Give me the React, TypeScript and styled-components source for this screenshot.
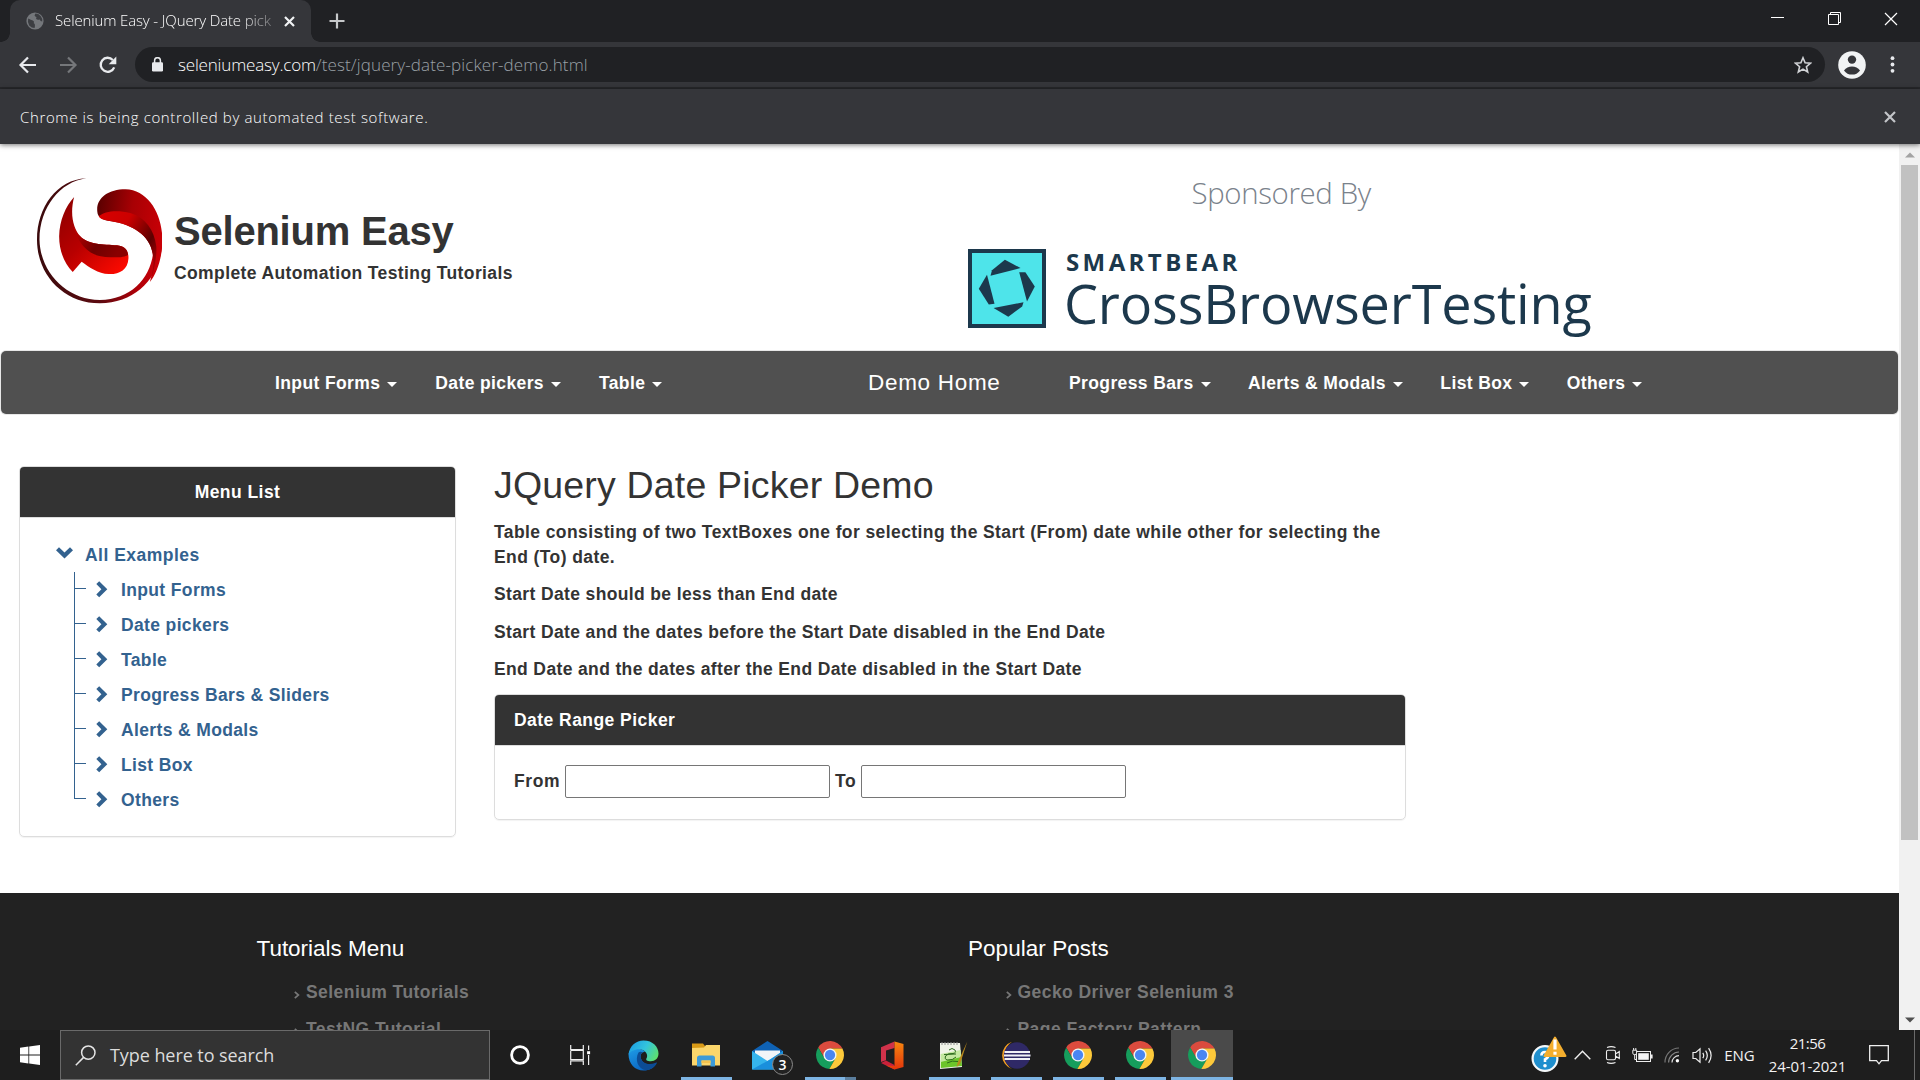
import React from "react";
import styled, { createGlobalStyle, css } from "styled-components";

const GlobalStyle = createGlobalStyle`
  *, *::before, *::after { box-sizing: border-box; }
  body { margin: 0; overflow: hidden; }
  svg { display: block; flex: none; }
`;

const ui = css`
  font-family: "Open Sans", "Noto Sans", sans-serif;
`;

const Desktop = styled.div`
  width: 1920px;
  height: 1080px;
  display: flex;
  flex-direction: column;
  overflow: hidden;
  background: #fff;
  white-space: nowrap;
`;

/* ---------- browser chrome ---------- */

const TabStrip = styled.div`
  ${ui}
  flex: none;
  height: 42px;
  display: flex;
  background: #202124;
`;

const Tab = styled.div`
  position: relative;
  width: 301px;
  margin-left: 10px;
  padding: 0 16px;
  display: flex;
  align-items: center;
  border-radius: 10px 10px 0 0;
  background: #35363a;

  &::before,
  &::after {
    content: "";
    position: absolute;
    bottom: 0;
    width: 9px;
    height: 9px;
  }
  &::before {
    left: -9px;
    background: radial-gradient(circle at 0 0, transparent 8.5px, #35363a 9px);
  }
  &::after {
    right: -9px;
    background: radial-gradient(circle at 100% 0, transparent 8.5px, #35363a 9px);
  }
`;

const TabTitle = styled.div`
  width: 217px;
  margin: 0 13px 0 11px;
  overflow: hidden;
  font-size: 15px;
  font-weight: 300;
  line-height: 40px;
  padding-bottom: 2px;
  letter-spacing: -0.14px;
  color: #fff;
  mask-image: linear-gradient(90deg, #000 84%, rgba(0, 0, 0, 0.35) 100%);
`;

const NewTab = styled.div`
  width: 52px;
  display: flex;
  align-items: center;
  justify-content: center;
`;

const WindowButtons = styled.div`
  margin-left: auto;
  display: flex;
`;

const WindowButton = styled.div`
  width: 57px;
  height: 37px;
  display: flex;
  align-items: center;
  justify-content: center;
  padding-right: 1px;
`;

const Toolbar = styled.div`
  ${ui}
  flex: none;
  height: 47px;
  display: flex;
  align-items: flex-start;
  padding: 5px 25px 0 18px;
  background: #35363a;
  border-bottom: 2px solid #27282b;
`;

const NavIcons = styled.div`
  width: 117px;
  height: 35px;
  display: flex;
  align-items: center;
  gap: 20px;
`;

const AddressBar = styled.div`
  flex: 1;
  height: 35px;
  display: flex;
  align-items: center;
  padding: 0 13px 0 17px;
  border-radius: 18px;
  background: #202124;
`;

const Url = styled.div`
  flex: 1;
  margin-left: 15px;
  font-size: 17px;
  line-height: 35px;
  font-weight: 300;
  letter-spacing: 0.12px;
  color: #9aa0a6;
`;

const Host = styled.span`
  letter-spacing: -0.17px;
  color: #fff;
`;

const ToolbarEnd = styled.div`
  height: 35px;
  display: flex;
  align-items: center;
  gap: 24px;
  margin-left: 13px;
`;

const InfoBar = styled.div`
  ${ui}
  position: relative;
  z-index: 1;
  flex: none;
  height: 55px;
  display: flex;
  align-items: center;
  justify-content: space-between;
  padding: 0 24px 0 20px;
  background: #35363a;
  color: #fff;
  font-size: 15px;
  font-weight: 300;
  letter-spacing: 0.63px;
  box-shadow: 0 1px 5px rgba(0, 0, 0, 0.55);
`;

/* ---------- page ---------- */

const Viewport = styled.div`
  flex: none;
  height: 886px;
  display: flex;
`;

const Page = styled.main`
  width: 1899px;
  height: 886px;
  overflow: hidden;
  display: flex;
  flex-direction: column;
  font: bold 17.5px/25px "Liberation Sans", Arial, sans-serif;
  letter-spacing: 0.38px;
  color: #333;
`;

const Header = styled.header`
  flex: none;
  height: 207px;
  display: flex;
`;

const Brand = styled.div`
  width: 968px;
  display: flex;
  align-items: flex-start;
  padding: 34px 0 0 37px;
`;

const BrandText = styled.div`
  margin: 30px 0 0 12px;
`;

const SiteName = styled.div`
  font-size: 40px;
  line-height: 46px;
  letter-spacing: -0.22px;
`;

const Tagline = styled.div`
  margin-top: 7px;
  letter-spacing: 0.39px;
`;

const Sponsor = styled.div`
  ${ui}
  padding-top: 29px;
`;

const SponsoredBy = styled.div`
  padding-left: 223.5px;
  font-size: 29.4px;
  font-weight: 300;
  line-height: 40px;
  letter-spacing: -0.35px;
  color: #7a828b;
`;

const SponsorLogo = styled.div`
  display: flex;
  align-items: flex-start;
  margin-top: 36px;
  color: #1c384c;
`;

const SponsorName = styled.div`
  margin: -2px 0 0 20px;
`;

const Company = styled.div`
  font-size: 24px;
  font-weight: 700;
  line-height: 30px;
  letter-spacing: 3.4px;
`;

const Product = styled.div`
  margin: -11.5px 0 0 -2px;
  font-size: 54px;
  font-weight: 400;
  line-height: 74px;
  letter-spacing: -0.15px;
`;

const NavBar = styled.nav`
  flex: none;
  height: 63px;
  margin: 0 1px;
  padding-top: 1px;
  display: flex;
  align-items: center;
  border-radius: 5px;
  background: #505050;
  box-shadow: 0 0 0 1px #e7e7e7;
  color: #fff;
`;

const NavGroup = styled.div<{ $gap: number }>`
  display: flex;
  gap: ${(p) => p.$gap}px;
`;

const LeftNav = styled(NavGroup)`
  width: 593px;
  margin-left: 274px;
`;

const NavItem = styled.div`
  display: flex;
  align-items: center;

  &::after {
    content: "";
    margin: 2px 0 0 7px;
    border: 5px solid transparent;
    border-top-color: #fff;
    border-bottom: 0;
  }
`;

const NavHome = styled.div`
  width: 201px;
  padding-bottom: 1px;
  font-size: 22.5px;
  font-weight: 400;
  letter-spacing: 0.7px;
`;

const Content = styled.section`
  flex: none;
  height: 479px;
  padding: 52px 19px 0;
  display: flex;
  align-items: flex-start;
  gap: 38px;
`;

const Panel = styled.div`
  border: 1px solid #ddd;
  border-radius: 5px;
  overflow: hidden;
  box-shadow: 0 1px 1px rgba(0, 0, 0, 0.05);
`;

const PanelHeading = styled.div<{ $center?: boolean }>`
  height: 51px;
  padding: 13px 19px 12px;
  text-align: ${(p) => (p.$center ? "center" : "left")};
  letter-spacing: 0.45px;
  border-bottom: 1px solid #ddd;
  background: #333;
  color: #fff;
`;

const Sidebar = styled(Panel)`
  width: 437px;
  height: 371px;
`;

const Tree = styled.div`
  padding: 19px 0 0 36px;
  letter-spacing: 0.36px;
  color: #33628f;
`;

const TreeRoot = styled.div`
  height: 35px;
  padding-top: 2px;
  display: flex;
  align-items: center;
  gap: 12px;
  letter-spacing: 0.48px;

  svg {
    margin-top: -6px;
  }
`;

const TreeList = styled.ul`
  list-style: none;
  margin: 0 0 0 18px;
  padding: 0;
`;

const TreeItem = styled.li`
  position: relative;
  height: 35px;
  display: flex;
  align-items: center;
  gap: 13.5px;
  padding: 2px 0 0 21.5px;

  svg {
    margin-top: -3px;
  }
  &::before {
    content: "";
    position: absolute;
    left: 0;
    top: 0;
    width: 12px;
    height: 17px;
    border: solid #33628f;
    border-width: 0 0 1px 1px;
  }
  &:not(:last-child)::after {
    content: "";
    position: absolute;
    left: 0;
    top: 0;
    height: 35px;
    border-left: 1px solid #33628f;
  }
`;

const Main = styled.div`
  width: 911.5px;
`;

const Title = styled.h1`
  margin: -2px 0 13.5px;
  font-size: 37.5px;
  line-height: 42px;
  font-weight: 400;
  letter-spacing: 0.18px;
`;

const Para = styled.p`
  margin: 0 0 12.5px;
  letter-spacing: 0.365px;

  &:first-of-type {
    letter-spacing: 0.41px;
  }
`;

const PickerPanel = styled(Panel)`
  height: 126px;
  margin-top: -1px;
`;

const PickerForm = styled.div`
  display: flex;
  align-items: center;
  padding: 19px 19px 0;
`;

const FieldLabel = styled.label<{ $w: number }>`
  width: ${(p) => p.$w}px;
  letter-spacing: 0.6px;
`;

const DateInput = styled.input`
  width: 265px;
  height: 33px;
  margin-right: 5px;
  border: 1px solid #767676;
  border-radius: 2px;
  background: #fff;
`;

const Footer = styled.footer`
  flex: none;
  height: 240px;
  padding: 43px 0 0 256.5px;
  display: flex;
  background: #222;
`;

const FooterColumn = styled.div`
  width: 711.5px;
`;

const FooterTitle = styled.div<{ $ls: number }>`
  margin-bottom: 12px;
  font-size: 22.5px;
  font-weight: 400;
  line-height: 26px;
  letter-spacing: ${(p) => p.$ls}px;
  color: #fff;
`;

const FooterLink = styled.div`
  height: 37px;
  padding-left: 37.5px;
  display: flex;
  align-items: center;
  gap: 6px;
  letter-spacing: 0.44px;
  color: #777;

  svg {
    margin-top: 4px;
  }
`;

const ScrollTrack = styled.div`
  width: 21px;
  display: flex;
  flex-direction: column;
  align-items: center;
  background: #f1f1f1;
`;

const ScrollArrow = styled.div`
  height: 21px;
  display: flex;
  align-items: center;
`;

const ScrollThumb = styled.div`
  width: 17px;
  height: 675px;
  margin-bottom: auto;
  background: #c1c1c1;
`;

/* ---------- taskbar ---------- */

const Taskbar = styled.div`
  ${ui}
  position: relative;
  flex: none;
  height: 50px;
  display: flex;
  background: #1e1e1e;
  color: #f2f2f2;
  font-size: 15px;
`;

const TaskButton = styled.div`
  width: 60px;
  display: flex;
  align-items: center;
  justify-content: center;
`;

const SearchBox = styled.div`
  width: 430px;
  padding-left: 14px;
  display: flex;
  align-items: center;
  gap: 14px;
  border: 1px solid #6a6a6a;
  background: #333;
  font-size: 18px;
  letter-spacing: -0.07px;
  color: #dcdcdc;
`;

const Apps = styled.div`
  display: flex;
  margin-left: 3px;
`;

const TaskApp = styled.div<{ $state: "idle" | "open" | "stack" | "active" }>`
  position: relative;
  width: 62px;
  display: flex;
  align-items: center;
  justify-content: center;
  padding-right: 1px;
  background: ${(p) => (p.$state === "active" ? "#4a4a4a" : "transparent")};

  &::after {
    content: "";
    display: ${(p) => (p.$state === "idle" ? "none" : "block")};
    position: absolute;
    bottom: 0;
    height: 3px;
    left: ${(p) => (p.$state === "active" ? 0 : 6)}px;
    right: ${(p) => (p.$state === "active" ? 0 : 5)}px;
    background: ${(p) =>
      p.$state === "stack" ? "linear-gradient(90deg, #7db4e3 40px, #5b7f9e 40px)" : "#7db4e3"};
  }
`;

const MailBadge = styled.div`
  position: absolute;
  left: 35px;
  top: 24px;
  width: 21px;
  height: 21px;
  border: 1px solid #8a8a8a;
  border-radius: 50%;
  background: #222;
  color: #fff;
  font-size: 14px;
  font-weight: 600;
  line-height: 19px;
  text-align: center;
`;

const Tray = styled.div`
  margin-left: auto;
  display: flex;
`;

const TraySlot = styled.div<{ $w: number }>`
  width: ${(p) => p.$w}px;
  display: flex;
  align-items: center;
  justify-content: center;
`;

const Clock = styled.div`
  text-align: center;
  line-height: 23px;
  letter-spacing: -0.1px;
`;

const ClockTime = styled.div`
  letter-spacing: -0.5px;
`;

const ShowDesktop = styled.div`
  width: 6px;
  margin-left: 9px;
  border-left: 1px solid #6a6a6a;
`;

/* ---------- drawings ---------- */

const SeleniumLogo = () => (
  <svg width="125" height="126" viewBox="104 113 350 378" preserveAspectRatio="none">
    <defs>
      <linearGradient id="top" x1="0" y1="0.3" x2="1" y2="0.5">
        <stop offset="0" stopColor="#5e0000" />
        <stop offset="0.5" stopColor="#a80004" />
        <stop offset="1" stopColor="#c90006" />
      </linearGradient>
      <linearGradient id="fold" x1="0" y1="0" x2="1" y2="0.7">
        <stop offset="0" stopColor="#d80000" />
        <stop offset="0.4" stopColor="#cc0000" />
        <stop offset="0.8" stopColor="#5c0000" />
        <stop offset="1" stopColor="#a00004" />
      </linearGradient>
      <linearGradient id="ring" x1="0" y1="0" x2="1" y2="0">
        <stop offset="0" stopColor="#3a0a0c" />
        <stop offset="0.5" stopColor="#5c0a10" />
        <stop offset="0.8" stopColor="#b00008" />
        <stop offset="1" stopColor="#d00008" />
      </linearGradient>
      <linearGradient id="low" x1="0" y1="0" x2="0.9" y2="1">
        <stop offset="0" stopColor="#8a0000" />
        <stop offset="0.5" stopColor="#b80000" />
        <stop offset="1" stopColor="#ff0a00" />
      </linearGradient>
      <linearGradient id="lowShade" x1="0" y1="0" x2="1" y2="0.4">
        <stop offset="0" stopColor="#d00000" />
        <stop offset="0.6" stopColor="#700000" />
        <stop offset="1" stopColor="#8a0000" />
      </linearGradient>
    </defs>
    <path
      fill="url(#ring)"
      d="M242 114C160 118 104 200 104 298C104 405 180 489 280 489C385 488 453 405 455 300L430 330C424 412 368 478 280 479C188 478 113 398 111 298C111 200 170 124 242 114Z"
    />
    <path
      fill="url(#top)"
      d="M273 215C268 175 302 147 352 147C415 149 455 220 455 300C455 350 440 400 420 425C428 395 432 365 428 340C420 285 370 252 312 243C284 239 274 229 273 215Z"
    />
    <path
      fill="url(#fold)"
      d="M277 228C292 212 330 208 365 218C408 232 432 268 438 318C440 345 434 378 424 415C430 385 432 362 428 340C420 285 370 252 312 243C290 240 279 234 277 228Z"
    />
    <path
      fill="url(#low)"
      d="M208 170C195 222 206 266 225 288C250 316 300 312 335 316C354 320 361 335 360 355C358 388 335 402 305 401C275 400 250 380 229 364L204 395C182 370 166 335 166 288C167 240 184 198 208 170Z"
    />
    <path
      fill="url(#lowShade)"
      d="M204 245C208 266 215 278 225 288C250 316 300 312 335 316C350 319 358 330 359 343C350 352 322 352 295 350C255 346 218 320 204 245Z"
    />
  </svg>
);

const CrossBrowserIcon = () => (
  <svg width="78" height="79" viewBox="0 0 78 79">
    <rect x="2" y="2" width="74" height="75" fill="#4ee4ea" stroke="#1c384c" strokeWidth="4" />
    <g fill="#1c384c">
      <path d="M22.5 26.7L24 21.3L36.9 10.7L52.5 19Z" />
      <path d="M51.2 23.3H57.4L66.8 37.5L59 52.5Z" />
      <path d="M55.5 53.3L54.2 57.4L40.3 67.8L25.6 59Z" />
      <path d="M19 25.7L26.5 54.7L20.8 55.4L10.8 39.8Z" />
    </g>
  </svg>
);

const Chevron = ({ down }: { down?: boolean }) =>
  down ? (
    <svg width="17" height="12" viewBox="0 0 17 12">
      <path d="M0 3.2L3 0.3L8.5 5.6L14 0.3L17 3.2L8.5 11.5Z" fill="#33628f" />
    </svg>
  ) : (
    <svg width="12" height="17" viewBox="0 0 12 17">
      <path d="M0.3 3L3.2 0.2L11.3 8.2L3.2 16.3L0.3 13.5L5.4 8.2Z" fill="#33628f" />
    </svg>
  );

const Cross = ({ size, width, color }: { size: number; width: number; color: string }) => (
  <svg width={size} height={size} viewBox={`0 0 ${size} ${size}`}>
    <path
      d={`M1 1L${size - 1} ${size - 1}M${size - 1} 1L1 ${size - 1}`}
      stroke={color}
      strokeWidth={width}
    />
  </svg>
);

const wedge = "M-20.2 -12.95L-9.53 5.5L0 0L0 -11L21.3 -11A24 24 0 0 0 -20.2 -12.95Z";

const ChromeIcon = () => (
  <svg width="28" height="28" viewBox="-24 -24 48 48">
    <path d={wedge} fill="#db4b3e" />
    <path d={wedge} fill="#169d5c" transform="rotate(-120)" />
    <path d={wedge} fill="#fdc93a" transform="rotate(120)" />
    <circle r="11.2" fill="#f3f6f4" />
    <circle r="8.8" fill="#4a86f2" />
  </svg>
);

const EdgeIcon = () => (
  <svg width="31" height="31" viewBox="0 0 31 31">
    <defs>
      <linearGradient id="edgeTop" x1="0" y1="0.3" x2="1" y2="0.7">
        <stop offset="0" stopColor="#1c9fe4" />
        <stop offset="0.5" stopColor="#33c4dc" />
        <stop offset="1" stopColor="#5fe06b" />
      </linearGradient>
      <linearGradient id="edgeLeft" x1="0" y1="0" x2="0.6" y2="1">
        <stop offset="0" stopColor="#1e9ce6" />
        <stop offset="1" stopColor="#0a63c0" />
      </linearGradient>
    </defs>
    <path
      fill="url(#edgeLeft)"
      d="M0.5 14C0.5 24 7 30.5 15.5 30.5C21 30.5 26 28 28.5 23.5C24 26 13 25 12.5 16.5C12.5 13 15 11.5 17 12C14 8 4 7 0.5 14Z"
    />
    <path
      fill="#0c4c94"
      d="M10.5 12.5C6.5 20 10 29 18 30.2C23 29.8 27 27 29 22.8C28.5 22.2 28 22.5 27 23C20 26 13 22.5 12.5 16.5C12.4 14.5 13.3 13 14.6 12.2C13 11.3 11.5 11.5 10.5 12.5Z"
    />
    <path
      fill="url(#edgeTop)"
      d="M0.5 14.5C1.5 6 8 0.5 15.5 0.5C25 0.5 30.5 7 30.5 13.5C30.5 18.5 27 21.2 22.8 21.2C19 21.2 17.6 19.8 18.4 18.4C20.6 15.5 18 9.2 11 9.2C6 9.2 2 11.5 0.5 14.5Z"
    />
  </svg>
);

const ExplorerIcon = () => (
  <svg width="28" height="24" viewBox="0 0 28 24">
    <path d="M0 0.5H11L13 3V8H0Z" fill="#d99a16" />
    <path d="M0 5L12 4.5L14 2H28V22.5H0Z" fill="#fbd66b" />
    <path d="M5 23.5V15Q5 12.5 7.5 12.5H20.5Q23 12.5 23 15V23.5H18.5V17.5H9.5V23.5Z" fill="#3d9bd8" />
    <path d="M9.5 17.5H18.5V20H9.5Z" fill="#f4c24d" />
  </svg>
);

const MailIcon = () => (
  <svg width="31" height="29" viewBox="0 0 31 29">
    <path d="M0 10L15.5 0L31 10V14H0Z" fill="#0f62b4" />
    <path d="M3 9.5H28V18L15.5 24L3 18Z" fill="#f2f5f8" />
    <path d="M0 10L15.5 20L31 10V28.5H0Z" fill="#35b4ec" />
    <path d="M0 28.5L19 18L31 10V28.5Z" fill="#1a8fdc" />
  </svg>
);

const OfficeIcon = () => (
  <svg width="24" height="29" viewBox="0 0 24 29">
    <defs>
      <linearGradient id="office" x1="0" y1="0" x2="0" y2="1">
        <stop offset="0" stopColor="#f7860f" />
        <stop offset="1" stopColor="#e2350c" />
      </linearGradient>
    </defs>
    <path d="M14.5 0.5L1 6.3V21L6 19.2V9.5L14.5 7Z" fill="#d0324a" />
    <path d="M1 22L6 19.5L14.5 24V28.5Z" fill="#c9213a" />
    <path d="M14.5 0.5L23.5 3V26L14.5 28.5L6 24.5L14.5 25Z" fill="url(#office)" />
  </svg>
);

const NotepadIcon = () => (
  <svg width="29" height="29" viewBox="0 0 29 29">
    <path d="M1 2L21 2L23 26L1 28Z" fill="#f0f3e8" />
    <path d="M1.8 19L22 14L23 25L1.8 27Z" fill="#6cc52a" />
    <path d="M1.6 13L21.6 9L22.2 16L1.7 21Z" fill="#c4e8a0" />
    <path d="M3 1V4M6 1V4M9 1V4M12 1V4M15 1V4M18 1V4" stroke="#8c8c8c" strokeWidth="1" />
    <path
      d="M10 9Q13 6 16 9Q17.5 12 14 12.5Q9 12 6.5 15Q5 18 8 19Q14 19.5 17 16M5 13.5L17 13M8 22Q13 19 19 20.5"
      fill="none"
      stroke="#2d6b1c"
      strokeWidth="1"
    />
    <path d="M28.3 0.5L18.5 22L17.6 26L21 23Z" fill="#b98a1d" />
  </svg>
);

const EclipseIcon = () => (
  <svg width="31" height="29" viewBox="0 0 31 29">
    <path d="M12 0.8A14.3 14.3 0 0 0 12 28A16 16 0 0 1 12 0.8Z" fill="#f4a021" />
    <circle cx="17" cy="14.5" r="13.2" fill="#2f2966" />
    <path d="M4.5 11H30M4 14.5H30.5M4.5 18H30" stroke="#f1f1f7" strokeWidth="1.9" />
  </svg>
);

const Triangle = ({ flip, color }: { flip?: boolean; color: string }) => (
  <svg width="10" height="6" viewBox="0 0 10 6">
    <path d={flip ? "M0 0.5H10L5 5.5Z" : "M0 5.5H10L5 0.5Z"} fill={color} />
  </svg>
);

const navLeft = ["Input Forms", "Date pickers", "Table"];
const navRight = ["Progress Bars", "Alerts & Modals", "List Box", "Others"];
const treeItems = [
  "Input Forms",
  "Date pickers",
  "Table",
  "Progress Bars & Sliders",
  "Alerts & Modals",
  "List Box",
  "Others",
];
const footerColumns = [
  { title: "Tutorials Menu", ls: -0.02, links: ["Selenium Tutorials", "TestNG Tutorial"] },
  { title: "Popular Posts", ls: 0.05, links: ["Gecko Driver Selenium 3", "Page Factory Pattern"] },
];

export default function App() {
  return (
    <Desktop>
      <GlobalStyle />
      <TabStrip>
        <Tab>
          <svg width="18" height="18" viewBox="0 0 18 18">
            <circle cx="9" cy="9" r="8.6" fill="#74777b" />
            <path
              d="M2.2 6.5Q5 8 6.8 8.4Q8.6 9 7.8 11.2Q9.6 12 8.6 16Q5.6 16 3.2 13.4Q1.2 10.6 2.2 6.5ZM9.4 1.6Q12.5 1.6 14.6 4Q16.8 6.6 16.2 9.6Q14.2 9.4 13.8 7.4Q11.4 8.4 10 6.8Q11.2 5 9.2 4.6Q7.8 3.4 9.4 1.6Z"
              fill="#3c3e42"
            />
          </svg>
          <TabTitle>Selenium Easy - JQuery Date pick</TabTitle>
          <Cross size={11} width={2.2} color="#f1f3f4" />
        </Tab>
        <NewTab>
          <svg width="16" height="16" viewBox="0 0 16 16">
            <path d="M8 0.5V15.5M0.5 8H15.5" stroke="#c6c8ca" strokeWidth="2.2" />
          </svg>
        </NewTab>
        <WindowButtons>
          <WindowButton>
            <svg width="13" height="3" viewBox="0 0 13 3">
              <path d="M0 0.5H13" stroke="#fff" />
            </svg>
          </WindowButton>
          <WindowButton>
            <svg width="13" height="13" viewBox="0 0 13 13">
              <path d="M0.5 2.5H10.5V12.5H0.5ZM2.5 2.5V0.5H12.5V10.5H10.5" fill="none" stroke="#fff" />
            </svg>
          </WindowButton>
          <WindowButton>
            <Cross size={14} width={1.2} color="#fff" />
          </WindowButton>
        </WindowButtons>
      </TabStrip>

      <Toolbar>
        <NavIcons>
          <svg width="20" height="20" viewBox="0 0 20 20">
            <path d="M18 10H3M10 2.5L2.5 10L10 17.5" fill="none" stroke="#e8eaed" strokeWidth="2.2" />
          </svg>
          <svg width="20" height="20" viewBox="0 0 20 20">
            <path d="M2 10H17M10 2.5L17.5 10L10 17.5" fill="none" stroke="#75777a" strokeWidth="2.2" />
          </svg>
          <svg width="20" height="20" viewBox="0 0 20 20">
            <path d="M16.2 12.3A7 7 0 1 1 14.8 5" fill="none" stroke="#e8eaed" strokeWidth="2.3" />
            <path d="M18.3 1.6V9.2H10.7Z" fill="#e8eaed" />
          </svg>
        </NavIcons>
        <AddressBar>
          <svg width="11" height="15" viewBox="0 0 11 15">
            <rect y="5.3" width="11" height="9.2" rx="1.2" fill="#e8eaed" />
            <path d="M2.6 6V3.6A2.9 2.9 0 0 1 8.4 3.6V6" fill="none" stroke="#e8eaed" strokeWidth="1.5" />
          </svg>
          <Url>
            <Host>seleniumeasy.com</Host>/test/jquery-date-picker-demo.html
          </Url>
          <svg width="18" height="18" viewBox="0 0 18 18">
            <path
              d="M9 1.8L11.1 6.8L16.5 7.2L12.4 10.7L13.7 16L9 13.1L4.3 16L5.6 10.7L1.5 7.2L6.9 6.8Z"
              fill="none"
              stroke="#d0d2d5"
              strokeWidth="1.6"
            />
          </svg>
        </AddressBar>
        <ToolbarEnd>
          <svg width="28" height="28" viewBox="0 0 28 28">
            <circle cx="14" cy="14" r="13.8" fill="#f1f3f4" />
            <circle cx="14" cy="8.6" r="4.2" fill="#35363a" />
            <path d="M6 19.4Q9 15.4 14 15.4Q19 15.4 22 19.4Q19 23.6 14 23.6Q9 23.6 6 19.4Z" fill="#35363a" />
          </svg>
          <svg width="5" height="17" viewBox="0 0 5 17">
            <g fill="#e8eaed">
              <circle cx="2.5" cy="2.2" r="1.9" />
              <circle cx="2.5" cy="8.5" r="1.9" />
              <circle cx="2.5" cy="14.8" r="1.9" />
            </g>
          </svg>
        </ToolbarEnd>
      </Toolbar>

      <InfoBar>
        <span>Chrome is being controlled by automated test software.</span>
        <Cross size={12} width={2.2} color="#c3c5c8" />
      </InfoBar>

      <Viewport>
        <Page>
          <Header>
            <Brand>
              <SeleniumLogo />
              <BrandText>
                <SiteName>Selenium Easy</SiteName>
                <Tagline>Complete Automation Testing Tutorials</Tagline>
              </BrandText>
            </Brand>
            <Sponsor>
              <SponsoredBy>Sponsored By</SponsoredBy>
              <SponsorLogo>
                <CrossBrowserIcon />
                <SponsorName>
                  <Company>SMARTBEAR</Company>
                  <Product>CrossBrowserTesting</Product>
                </SponsorName>
              </SponsorLogo>
            </Sponsor>
          </Header>

          <NavBar>
            <LeftNav $gap={38}>
              {navLeft.map((t) => (
                <NavItem key={t}>{t}</NavItem>
              ))}
            </LeftNav>
            <NavHome>Demo Home</NavHome>
            <NavGroup $gap={37.4}>
              {navRight.map((t) => (
                <NavItem key={t}>{t}</NavItem>
              ))}
            </NavGroup>
          </NavBar>

          <Content>
            <Sidebar>
              <PanelHeading $center>Menu List</PanelHeading>
              <Tree>
                <TreeRoot>
                  <Chevron down />
                  All Examples
                </TreeRoot>
                <TreeList>
                  {treeItems.map((t) => (
                    <TreeItem key={t}>
                      <Chevron />
                      {t}
                    </TreeItem>
                  ))}
                </TreeList>
              </Tree>
            </Sidebar>
            <Main>
              <Title>JQuery Date Picker Demo</Title>
              <Para>
                Table consisting of two TextBoxes one for selecting the Start (From) date while other for selecting the
                <br />
                End (To) date.
              </Para>
              <Para>Start Date should be less than End date</Para>
              <Para>Start Date and the dates before the Start Date disabled in the End Date</Para>
              <Para>End Date and the dates after the End Date disabled in the Start Date</Para>
              <PickerPanel>
                <PanelHeading>Date Range Picker</PanelHeading>
                <PickerForm>
                  <FieldLabel $w={51}>From</FieldLabel>
                  <DateInput />
                  <FieldLabel $w={26}>To</FieldLabel>
                  <DateInput />
                </PickerForm>
              </PickerPanel>
            </Main>
          </Content>

          <Footer>
            {footerColumns.map((c) => (
              <FooterColumn key={c.title}>
                <FooterTitle $ls={c.ls}>{c.title}</FooterTitle>
                {c.links.map((l) => (
                  <FooterLink key={l}>
                    <svg width="6" height="8" viewBox="0 0 6 8">
                      <path d="M0.8 0.8L4.4 4L0.8 7.2" fill="none" stroke="#777" strokeWidth="1.7" />
                    </svg>
                    {l}
                  </FooterLink>
                ))}
              </FooterColumn>
            ))}
          </Footer>
        </Page>
        <ScrollTrack>
          <ScrollArrow>
            <Triangle color="#a3a3a3" />
          </ScrollArrow>
          <ScrollThumb />
          <ScrollArrow>
            <Triangle flip color="#505050" />
          </ScrollArrow>
        </ScrollTrack>
      </Viewport>

      <Taskbar>
        <TaskButton>
          <svg width="20" height="20" viewBox="0 0 20 20">
            <path
              d="M0 2.8L8.4 1.6V9.5H0ZM9.2 1.5L20 0V9.5H9.2ZM0 10.4H8.4V18.4L0 17.2ZM9.2 10.4H20V20L9.2 18.5Z"
              fill="#fff"
            />
          </svg>
        </TaskButton>
        <SearchBox>
          <svg width="21" height="21" viewBox="0 0 21 21">
            <circle cx="13.3" cy="7.6" r="6.7" fill="none" stroke="#e6e6e6" strokeWidth="1.5" />
            <path d="M8.6 12.4L0.8 20.2" stroke="#e6e6e6" strokeWidth="1.5" />
          </svg>
          Type here to search
        </SearchBox>
        <TaskButton>
          <svg width="20" height="20" viewBox="0 0 20 20">
            <circle cx="10" cy="10" r="8.4" fill="none" stroke="#fff" strokeWidth="2.8" />
          </svg>
        </TaskButton>
        <TaskButton>
          <svg width="21" height="20" viewBox="0 0 21 20">
            <path
              d="M0.7 0V4.5H13.3V0M0.7 5.5V14.5H13.3V5.5H0.7M0.7 20V15.8H13.3V20M18.6 0.5V5M18.6 10V20"
              fill="none"
              stroke="#f0f0f0"
              strokeWidth="1.2"
            />
            <rect x="17.1" y="6.2" width="3" height="3" fill="#fff" />
          </svg>
        </TaskButton>
        <Apps>
          <TaskApp $state="idle">
            <EdgeIcon />
          </TaskApp>
          <TaskApp $state="open">
            <ExplorerIcon />
          </TaskApp>
          <TaskApp $state="idle">
            <MailIcon />
            <MailBadge>3</MailBadge>
          </TaskApp>
          <TaskApp $state="stack">
            <ChromeIcon />
          </TaskApp>
          <TaskApp $state="idle">
            <OfficeIcon />
          </TaskApp>
          <TaskApp $state="open">
            <NotepadIcon />
          </TaskApp>
          <TaskApp $state="open">
            <EclipseIcon />
          </TaskApp>
          <TaskApp $state="open">
            <ChromeIcon />
          </TaskApp>
          <TaskApp $state="open">
            <ChromeIcon />
          </TaskApp>
          <TaskApp $state="active">
            <ChromeIcon />
          </TaskApp>
        </Apps>
        <Tray>
          <TraySlot $w={38}>
            <svg width="38" height="41" viewBox="0 0 38 41">
              <circle cx="15" cy="23.5" r="12.4" fill="#1f8fce" stroke="#f4f8fa" strokeWidth="2.2" />
              <path
                d="M11.4 20.5Q11.4 17 15 17Q18.4 17 18.4 20.2Q18.4 22.6 15 24.4V27"
                fill="none"
                stroke="#fff"
                strokeWidth="2.6"
              />
              <circle cx="15" cy="30.8" r="1.8" fill="#fff" />
              <path d="M25 2.5L35.5 21H14.5Z" fill="#f4ae2e" stroke="#f4ae2e" strokeWidth="2" strokeLinejoin="round" />
              <path d="M25 4.5V14.5M25 16.8V19.8" stroke="#fff" strokeWidth="3.2" />
            </svg>
          </TraySlot>
          <TraySlot $w={29}>
            <svg width="17" height="10" viewBox="0 0 17 10">
              <path d="M0.7 9.3L8.5 1.2L16.3 9.3" fill="none" stroke="#eee" strokeWidth="1.4" />
            </svg>
          </TraySlot>
          <TraySlot $w={31}>
            <svg width="16" height="18" viewBox="0 0 16 18">
              <path
                d="M3 4.2H9Q10.5 4.2 10.5 5.7V12.3Q10.5 13.8 9 13.8H3Q1.5 13.8 1.5 12.3V5.7Q1.5 4.2 3 4.2ZM10.5 8L14.3 5.5V12.5L10.5 10M2 1.5Q6 -0.2 10.5 1.5M2 16.5Q6 18.2 10.5 16.5"
                fill="none"
                stroke="#eee"
                strokeWidth="1.1"
              />
            </svg>
          </TraySlot>
          <TraySlot $w={29}>
            <svg width="21" height="15" viewBox="0 0 21 15">
              <rect x="4.5" y="3.5" width="14" height="10" fill="none" stroke="#eee" strokeWidth="1" />
              <rect x="6.2" y="5.2" width="10.6" height="6.6" fill="#f4f4f4" />
              <rect x="19" y="6.5" width="1.6" height="4" fill="#eee" />
              <path d="M0.8 2.2H4.6V5.2Q4.6 6.6 2.7 6.6Q0.8 6.6 0.8 5.2ZM1.6 0V2M3.8 0V2M2.7 6.6V11.5H4" fill="#1e1e1e" stroke="#eee" />
            </svg>
          </TraySlot>
          <TraySlot $w={30}>
            <svg width="16" height="16" viewBox="0 0 16 16">
              <g fill="none" strokeWidth="1.2">
                <path d="M1 15.4A14.2 14.2 0 0 1 15 1" stroke="#777" />
                <path d="M4.6 15.4A10.6 10.6 0 0 1 15 5" stroke="#888" />
                <path d="M8 15.4A7 7 0 0 1 15 8.6" stroke="#ddd" />
              </g>
              <circle cx="13.4" cy="13.8" r="1.7" fill="#fff" />
            </svg>
          </TraySlot>
          <TraySlot $w={30}>
            <svg width="21" height="17" viewBox="0 0 21 17">
              <path
                d="M1 5.5H3.8L8 1.8V15.2L3.8 11.5H1ZM10.8 5.8Q12.6 8.5 10.8 11.2M13.6 3.6Q17 8.5 13.6 13.4M16.6 1.2Q21.6 8.5 16.6 15.8"
                fill="none"
                stroke="#eee"
                strokeWidth="1.2"
              />
            </svg>
          </TraySlot>
          <TraySlot $w={45}>ENG</TraySlot>
          <TraySlot $w={91}>
            <Clock>
              <ClockTime>21:56</ClockTime>
              24-01-2021
            </Clock>
          </TraySlot>
          <TraySlot $w={52}>
            <svg width="20" height="20" viewBox="0 0 20 20">
              <path d="M0.7 0.7H19.3V15.7H12.5L10 18.8L7.5 15.7H0.7Z" fill="none" stroke="#f0f0f0" strokeWidth="1.3" />
            </svg>
          </TraySlot>
          <ShowDesktop />
        </Tray>
      </Taskbar>
    </Desktop>
  );
}
